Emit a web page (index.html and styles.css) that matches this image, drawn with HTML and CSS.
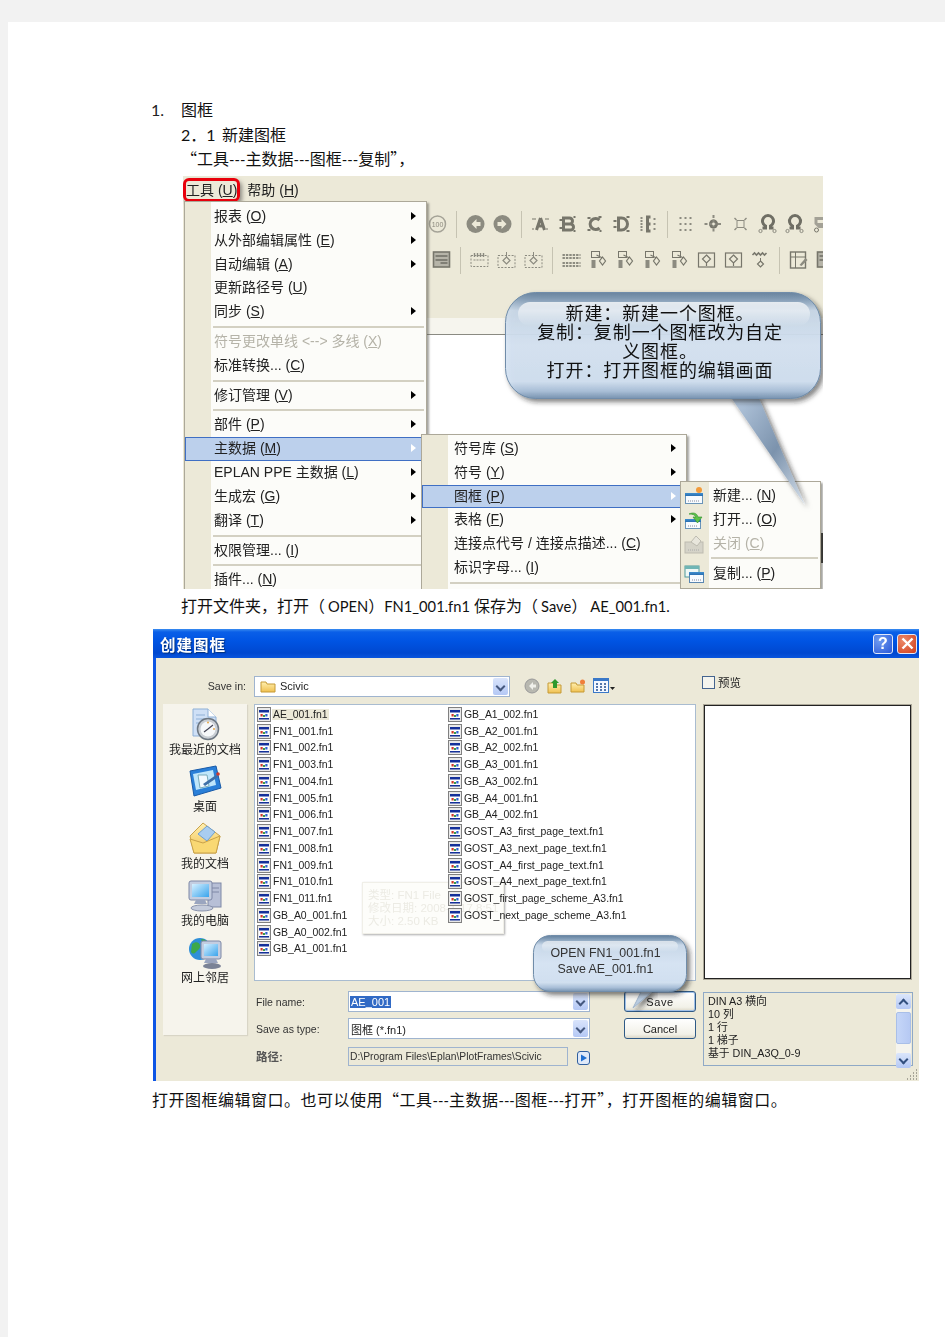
FILE: index.html
```html
<!DOCTYPE html>
<html lang="zh-CN">
<head>
<meta charset="utf-8">
<title>图框</title>
<link rel="stylesheet" href="styles.css">
</head>
<body>
<svg class="defs" width="0" height="0" aria-hidden="true">
  <defs>
    <linearGradient id="gWin" x1="0" y1="0" x2="0" y2="1"><stop offset="0" stop-color="#3f8fd0"/><stop offset="1" stop-color="#2a6fb0"/></linearGradient>
    <linearGradient id="gFolder" x1="0" y1="0" x2="0" y2="1"><stop offset="0" stop-color="#fff0b0"/><stop offset="1" stop-color="#f0c050"/></linearGradient>
    <linearGradient id="gScreen" x1="0" y1="0" x2="1" y2="1"><stop offset="0" stop-color="#d5f0ff"/><stop offset="1" stop-color="#3aa4ec"/></linearGradient>
    <linearGradient id="gB1" x1="0" y1="0" x2="0" y2="1">
      <stop offset="0" stop-color="#5d7b9a"/><stop offset=".06" stop-color="#7f9ab6"/><stop offset=".17" stop-color="#c9d9ea"/><stop offset=".5" stop-color="#d7e5f5"/><stop offset=".84" stop-color="#d2e1f2"/><stop offset=".93" stop-color="#a9c0da"/><stop offset="1" stop-color="#7491b0"/>
    </linearGradient>
    <linearGradient id="gTail" x1="0" y1="0" x2="1" y2="1"><stop offset="0" stop-color="#b9cce2"/><stop offset=".55" stop-color="#7c93ad"/><stop offset="1" stop-color="#d5dfea"/></linearGradient>
    <linearGradient id="gGloss" x1="0" y1="0" x2="0" y2="1"><stop offset="0" stop-color="#fff" stop-opacity=".9"/><stop offset="1" stop-color="#fff" stop-opacity="0"/></linearGradient>
    <filter id="fShadow" x="-10%" y="-10%" width="125%" height="130%"><feDropShadow dx="3" dy="3" stdDeviation="2.5" flood-color="#222" flood-opacity=".6"/></filter>

    <symbol id="fi" viewBox="0 0 14 15"><rect x=".5" y=".5" width="13" height="14" fill="#e9e9e9" stroke="#808080"/><rect x="2" y="3" width="10" height="9" fill="#fff"/><rect x="2" y="3" width="10" height="2.500" fill="#14309a"/><rect x="2" y="11" width="10" height="1.500" fill="#14309a"/><rect x="3.500" y="7" width="2.200" height="2.500" fill="#d0392b"/><rect x="8.300" y="7" width="2.200" height="2.500" fill="#2e62d0"/><rect x="6" y="8" width="2" height="2" fill="#3a9a4a"/></symbol>

    <symbol id="t100" viewBox="0 0 20 20"><circle cx="10" cy="10" r="8" fill="none" stroke="#a5a397" stroke-width="1.5"/><text x="10" y="12.5" font-size="7" text-anchor="middle" fill="#8c8a7e" font-family="Liberation Sans">100</text></symbol>
    <symbol id="tl" viewBox="0 0 20 20"><circle cx="10" cy="10" r="9" fill="#8c8b80"/><path d="M11 5 6 10l5 5v-3h4V8h-4z" fill="#ece9d8"/></symbol>
    <symbol id="tr" viewBox="0 0 20 20"><circle cx="10" cy="10" r="9" fill="#8c8b80"/><path d="M9 5l5 5-5 5v-3H5V8h4z" fill="#ece9d8"/></symbol>
    <symbol id="ta" viewBox="0 0 20 20"><path d="M10 4 6 16M10 4l4 12M7 12h6" stroke="#77766b" stroke-width="3" fill="none"/><path d="M2 5h3M15 5h3M2 15h2M16 15h2" stroke="#77766b" stroke-width="2" stroke-dasharray="1 1"/></symbol>
    <symbol id="tb" viewBox="0 0 20 20"><path d="M6 4h6a3 3 0 0 1 0 6H6zM6 10h7a3 3 0 0 1 0 6H6z" stroke="#77766b" stroke-width="3" fill="none"/><path d="M2 6h3M2 14h3M16 3h2M16 17h2" stroke="#77766b" stroke-width="2"/></symbol>
    <symbol id="tc" viewBox="0 0 20 20"><path d="M15 6a5.5 5.5 0 1 0 0 8" stroke="#77766b" stroke-width="3.200" fill="none"/><path d="M3 4h3M14 3h3M3 16h3M15 17h2" stroke="#77766b" stroke-width="2"/></symbol>
    <symbol id="td" viewBox="0 0 20 20"><path d="M7 4h3a6 6 0 0 1 0 12H7z" stroke="#77766b" stroke-width="3" fill="none"/><path d="M2 7h3M2 13h3M15 3h3M15 17h3" stroke="#77766b" stroke-width="2"/></symbol>
    <symbol id="te" viewBox="0 0 20 20"><path d="M12 3h-3v14h3M9 10h3" stroke="#77766b" stroke-width="3" fill="none"/><path d="M3 3v14M15 5h3M15 10h3M15 15h3" stroke="#8c8b80" stroke-width="2" stroke-dasharray="2 1"/></symbol>
    <symbol id="tdots" viewBox="0 0 20 20"><path d="M3 4h14M3 10h14M3 16h14" stroke="#8c8b80" stroke-width="2" stroke-dasharray="2 3"/></symbol>
    <symbol id="tstar" viewBox="0 0 20 20"><circle cx="10" cy="10" r="4.500" fill="#77766b"/><path d="M10 1v18M1 10h18" stroke="#8c8b80" stroke-width="2" stroke-dasharray="3 1.5"/><circle cx="10" cy="10" r="1.400" fill="#ece9d8"/></symbol>
    <symbol id="tx" viewBox="0 0 20 20"><rect x="6.500" y="6.500" width="7" height="7" fill="none" stroke="#8c8b80"/><path d="M4 4l2 2M16 4l-2 2M4 16l2-2M16 16l-2-2" stroke="#8c8b80" stroke-width="1.400"/></symbol>
    <symbol id="to" viewBox="0 0 20 20"><path d="M5 14h3v-2a5.500 5.500 0 1 1 5 0v2h3" stroke="#6f6e64" stroke-width="3" fill="none"/><circle cx="3" cy="17" r="1.600" fill="none" stroke="#8c8b80"/><circle cx="17" cy="17" r="1.600" fill="none" stroke="#8c8b80"/></symbol>
    <symbol id="tg" viewBox="0 0 20 20"><path d="M3 3h14v7l-4 4H7l-4-4z" fill="#a3a196"/><path d="M6 6h8v3H6z" fill="#ece9d8"/><circle cx="5" cy="16" r="2" fill="none" stroke="#77766b"/><circle cx="15" cy="16" r="2" fill="none" stroke="#77766b"/></symbol>
    <symbol id="tform" viewBox="0 0 20 20"><rect x="2" y="2" width="16" height="15" fill="#b6b4a8" stroke="#77766b" stroke-width="1.600"/><path d="M4 6h12M4 10h12M9 13h7" stroke="#6f6e64" stroke-width="1.500"/></symbol>
    <symbol id="tdash" viewBox="0 0 20 20"><rect x="1.500" y="5.500" width="17" height="11" fill="none" stroke="#8c8b80" stroke-dasharray="2 1.400"/><path d="M5 3v4M8 3v4M11 3v4M14 3v4" stroke="#8c8b80" stroke-width="1.400"/><path d="M4 10h12" stroke="#8c8b80" stroke-dasharray="2 1"/></symbol>
    <symbol id="tdia" viewBox="0 0 20 20"><rect x="1.500" y="5.500" width="17" height="12" fill="none" stroke="#8c8b80" stroke-dasharray="2 1.400"/><path d="M10 7l3.500 3.500L10 14l-3.500-3.500z" fill="none" stroke="#8c8b80" stroke-width="1.200"/><path d="M10 2v5" stroke="#8c8b80"/></symbol>
    <symbol id="tgrid" viewBox="0 0 20 20"><path d="M1 5h18M1 8h18M1 13h18M1 16h18" stroke="#8c8b80" stroke-width="2" stroke-dasharray="2.400 1"/></symbol>
    <symbol id="tbd" viewBox="0 0 20 20"><rect x="3" y="1.500" width="8" height="6" fill="none" stroke="#77766b"/><rect x="3" y="10" width="4" height="8" fill="#8c8b80"/><path d="M14 7l3 4-3 4-3-4zM8 5l6 3" stroke="#77766b" stroke-width="1.200" fill="none"/></symbol>
    <symbol id="tbox" viewBox="0 0 20 20"><rect x="2" y="3" width="16" height="14" fill="none" stroke="#77766b" stroke-width="1.200"/><path d="M10 5l4 4-4 4-4-4zM10 13v3" stroke="#77766b" stroke-width="1.200" fill="none"/></symbol>
    <symbol id="twave" viewBox="0 0 20 20"><path d="M2 5l2-2 2 2 2-2 2 2 2-2 2 2 2-2" stroke="#77766b" stroke-width="1.600" fill="none"/><path d="M10 8v3" stroke="#77766b"/><path d="M10 11l3 3-3 3-3-3z" fill="none" stroke="#77766b" stroke-width="1.200"/></symbol>
    <symbol id="tnote" viewBox="0 0 20 20"><rect x="2" y="2" width="15" height="16" fill="none" stroke="#77766b" stroke-width="1.400"/><path d="M2 7h15M7 2v16" stroke="#77766b"/><path d="M11 15l6-7 2 2-6 6z" fill="#8c8b80"/></symbol>

    <symbol id="mnew" viewBox="0 0 20 20"><rect x="1.500" y="7.500" width="17" height="10" fill="#f7fbff" stroke="#6a94b8"/><rect x="1" y="7" width="18" height="3" fill="url(#gWin)"/><path d="M4 15h12" stroke="#889" stroke-dasharray="1 1"/><circle cx="15" cy="4" r="3" fill="#f29a3a"/></symbol>
    <symbol id="mopen" viewBox="0 0 20 20"><rect x="1.500" y="9.500" width="15" height="9" fill="#f7fbff" stroke="#6a94b8"/><rect x="1" y="9" width="16" height="3" fill="url(#gWin)"/><path d="M4 16h10" stroke="#889" stroke-dasharray="1 1"/><path d="M5 4c4-2 8-1 9 3h4l-4.500 6L9 7h3c-1-2-3-3-7-3z" fill="#5cc24a" stroke="#2f8f2a" stroke-width=".6"/></symbol>
    <symbol id="mclose" viewBox="0 0 20 20"><rect x="1" y="8" width="18" height="11" fill="#d5d3c8" stroke="#bdbbb0"/><path d="M4 16h12" stroke="#aaa" stroke-dasharray="1 1"/><path d="M7 8l5-6 5 5-4 5z" fill="#e8e6dc" stroke="#bdbbb0"/></symbol>
    <symbol id="mcopy" viewBox="0 0 20 20"><rect x="1" y="2" width="14" height="11" fill="#eef7f5" stroke="#4e9a9a"/><rect x="1" y="2" width="14" height="3" fill="#6fb5b5"/><rect x="5.500" y="8.500" width="14" height="10" fill="#f7fbff" stroke="#5a86b0"/><rect x="5" y="8" width="15" height="3" fill="url(#gWin)"/><path d="M8 16h9" stroke="#889" stroke-dasharray="1 1"/></symbol>

    <symbol id="precent" viewBox="0 0 34 34"><path d="M5 1h15l8 8v19H5z" fill="#cfe0f6" stroke="#8fb0d6"/><path d="M20 1v8h8" fill="#fff" stroke="#8fb0d6"/><path d="M8 7h9M8 11h9M8 15h7" stroke="#8fb0d6"/><circle cx="20" cy="21" r="10.500" fill="#c9ced4" stroke="#6c7681" stroke-width="1.500"/><circle cx="20" cy="21" r="7.500" fill="#f6f8fa"/><path d="M20 21l5-4M20 21l-4 3" stroke="#445" stroke-width="1.200"/><circle cx="20" cy="14.500" r=".9" fill="#e5a03a"/><circle cx="26" cy="21" r=".9" fill="#e5a03a"/></symbol>
    <symbol id="pdesk" viewBox="0 0 34 34"><path d="M2 6 28 1l5 22-27 8z" fill="#2a7fd8" stroke="#185aa8"/><path d="M5 9l20-4 3 15-20 5z" fill="#bfe6fb"/><path d="M10 10h9l2 11-9 2z" fill="#f2f9ff" stroke="#7ab"/><path d="M15 19l13-9 2 2-13 9z" fill="#3f6fa8"/><circle cx="30" cy="9" r="1.800" fill="#d0392b"/></symbol>
    <symbol id="pdocs" viewBox="0 0 34 34"><path d="M2 14 15 1l17 13-4 17H6z" fill="url(#gFolder)" stroke="#c9a24a"/><path d="M10 12l9-8 8 6-8 9z" fill="#a9cdf0" stroke="#6e9fd0"/><path d="M2 17l13 4 17-7-4 17H6z" fill="#f9d873" stroke="#c9a24a"/></symbol>
    <symbol id="ppc" viewBox="0 0 34 34"><rect x="20" y="4" width="13" height="24" fill="#b7bfd6" stroke="#7e88a6"/><path d="M22 9h9M22 13h9" stroke="#7e88a6"/><rect x="1" y="2" width="23" height="19" rx="2" fill="#c3cde0" stroke="#7e88a6"/><rect x="4" y="5" width="17" height="13" fill="url(#gScreen)"/><path d="M8 21h9l2 4H6z" fill="#9aa5bf"/><ellipse cx="14" cy="29" rx="11" ry="3" fill="#c4cbdb" stroke="#8a93ad"/></symbol>
    <symbol id="pnet" viewBox="0 0 34 34"><circle cx="12" cy="13" r="11" fill="#2f8fd8"/><path d="M4 8c4-3 7-2 8 1s-2 5-4 7-3 2-5 0zM13 3c3 0 6 1 7 4l-4 3z" fill="#3da84a"/><rect x="13" y="5" width="20" height="18" rx="2" fill="#c3cde0" stroke="#7e88a6"/><rect x="16" y="8" width="14" height="12" fill="url(#gScreen)"/><path d="M18 23h10l2 4H16z" fill="#9aa5bf"/><ellipse cx="24" cy="30" rx="9" ry="3" fill="#7a8296"/></symbol>
  </defs>
</svg>

<main class="page">
  <p class="line lvl0"><span class="num">1.</span><span>图框</span></p>
  <p class="line lvl1"><span class="num2">2．1</span><span>新建图框</span></p>
  <p class="line lvl1 tight"><span class="cjk">“</span>工具<span class="dash">---</span>主数据<span class="dash">---</span>图框<span class="dash">---</span>复制<span class="cjk">”，</span></p>

  <section class="shot">
    <div class="menubar">
      <span class="mi">工具 (<u>U</u>)</span>
      <span class="mi">帮助 (<u>H</u>)</span>
      <span class="redmark"></span>
    </div>
    <div class="toolbar">
      <svg class="tool"><use href="#t100"/></svg><i class="tsep"></i>
      <svg class="tool"><use href="#tl"/></svg><svg class="tool"><use href="#tr"/></svg><i class="tsep"></i>
      <svg class="tool"><use href="#ta"/></svg><svg class="tool"><use href="#tb"/></svg><svg class="tool"><use href="#tc"/></svg><svg class="tool"><use href="#td"/></svg><svg class="tool"><use href="#te"/></svg><i class="tsep"></i>
      <svg class="tool"><use href="#tdots"/></svg><svg class="tool"><use href="#tstar"/></svg><svg class="tool"><use href="#tx"/></svg><svg class="tool"><use href="#to"/></svg><svg class="tool"><use href="#to"/></svg><svg class="tool"><use href="#tg"/></svg>
    </div>
    <div class="toolbar second">
      <svg class="tool"><use href="#tform"/></svg><i class="tsep"></i>
      <svg class="tool"><use href="#tdash"/></svg><svg class="tool"><use href="#tdia"/></svg><svg class="tool"><use href="#tdia"/></svg><i class="tsep"></i>
      <svg class="tool"><use href="#tgrid"/></svg><svg class="tool"><use href="#tbd"/></svg><svg class="tool"><use href="#tbd"/></svg><svg class="tool"><use href="#tbd"/></svg><svg class="tool"><use href="#tbd"/></svg><svg class="tool"><use href="#tbox"/></svg><svg class="tool"><use href="#tbox"/></svg><svg class="tool"><use href="#twave"/></svg><i class="tsep"></i>
      <svg class="tool"><use href="#tnote"/></svg><svg class="tool"><use href="#tform"/></svg>
    </div>
    <div class="strip"></div>
    <div class="canvas"><i class="darkbit"></i></div>

    <div class="menu m1">
      <div class="mrow has">报表 (<u>O</u>)</div>
      <div class="mrow has">从外部编辑属性 (<u>E</u>)</div>
      <div class="mrow has">自动编辑 (<u>A</u>)</div>
      <div class="mrow">更新路径号 (<u>U</u>)</div>
      <div class="mrow has">同步 (<u>S</u>)</div>
      <div class="msep"></div>
      <div class="mrow off">符号更改单线 &lt;--&gt; 多线 (<u>X</u>)</div>
      <div class="mrow">标准转换... (<u>C</u>)</div>
      <div class="msep"></div>
      <div class="mrow has">修订管理 (<u>V</u>)</div>
      <div class="msep"></div>
      <div class="mrow has">部件 (<u>P</u>)</div>
      <div class="mrow has hl">主数据 (<u>M</u>)</div>
      <div class="mrow has">EPLAN PPE 主数据 (<u>L</u>)</div>
      <div class="mrow has">生成宏 (<u>G</u>)</div>
      <div class="mrow has">翻译 (<u>T</u>)</div>
      <div class="msep wide"></div>
      <div class="mrow">权限管理... (<u>I</u>)</div>
      <div class="msep thin"></div>
      <div class="mrow">插件... (<u>N</u>)</div>
    </div>

    <div class="menu m2">
      <div class="mrow has">符号库 (<u>S</u>)</div>
      <div class="mrow has">符号 (<u>Y</u>)</div>
      <div class="mrow has hl">图框 (<u>P</u>)</div>
      <div class="mrow has">表格 (<u>F</u>)</div>
      <div class="mrow">连接点代号 / 连接点描述... (<u>C</u>)</div>
      <div class="mrow">标识字母... (<u>I</u>)</div>
      <div class="msep"></div>
    </div>

    <div class="menu m3">
      <div class="mrow"><svg class="micon"><use href="#mnew"/></svg>新建... (<u>N</u>)</div>
      <div class="mrow"><svg class="micon"><use href="#mopen"/></svg>打开... (<u>O</u>)</div>
      <div class="mrow off"><svg class="micon"><use href="#mclose"/></svg>关闭 (<u>C</u>)</div>
      <div class="msep"></div>
      <div class="mrow"><svg class="micon"><use href="#mcopy"/></svg>复制... (<u>P</u>)</div>
    </div>

    <div class="bubble b1">
      <svg class="bshape" width="330" height="225" viewBox="0 0 330 225">
        <path d="M226 105 301 214 254 105z" fill="url(#gTail)" filter="url(#fShadow)"/>
        <rect x="1.500" y="1.500" width="315" height="106" rx="30" fill="url(#gB1)" fill-opacity=".9" stroke="#6f8ca9" filter="url(#fShadow)"/>
        <rect x="14" y="11" width="292" height="24" rx="12" fill="url(#gGloss)" opacity=".85"/>
      </svg>
      <p class="btext">新建：新建一个图框。<br>复制：复制一个图框改为自定<br>义图框。<br>打开：打开图框的编辑画面</p>
    </div>
  </section>

  <p class="line lvl1 cap">打开文件夹，打开（<span class="lat gap">OPEN</span>）<span class="lat">FN1_001.fn1</span> 保存为（<span class="lat gap">Save</span>）<span class="lat gap">AE_001.fn1.</span></p>

  <section class="dlg">
    <header class="dtitle">
      <span class="dname">创建图框</span>
      <span class="capbtn help">?</span>
      <span class="capbtn close"><svg width="13" height="13" viewBox="0 0 13 13"><path d="M1.500 1.500l10 10M11.500 1.500l-10 10" stroke="#fff" stroke-width="2.400"/></svg></span>
    </header>
    <div class="dtop">
      <span class="lab savein">Save in:</span>
      <div class="combo top">
        <svg class="cfolder" width="16" height="14" viewBox="0 0 16 14"><path d="M1 3h5l1 2h8v8H1z" fill="url(#gFolder)" stroke="#c59a36"/></svg>
        <span>Scivic</span>
        <b class="drop"></b>
      </div>
      <div class="nav">
        <svg width="16" height="16" viewBox="0 0 16 16"><circle cx="8" cy="8" r="7" fill="#b8b8b0" stroke="#999"/><path d="M9 4 5 8l4 4V9.500h3v-3H9z" fill="#f0f0ea"/></svg>
        <svg width="16" height="16" viewBox="0 0 16 16"><path d="M1 5h5l1 2h7v8H1z" fill="url(#gFolder)" stroke="#c59a36"/><path d="M8 1l4 4h-2v5H6V5H4z" fill="#2f9a2f"/></svg>
        <svg width="16" height="16" viewBox="0 0 16 16"><path d="M1 5h5l1 2h7v7H1z" fill="url(#gFolder)" stroke="#c59a36"/><circle cx="12.500" cy="4" r="2.500" fill="#f07f3a"/></svg>
        <svg width="22" height="16" viewBox="0 0 22 16"><rect x=".5" y=".5" width="15" height="14" fill="#f4f8ff" stroke="#3a78c8"/><rect x="0" y="0" width="16" height="3" fill="#3a78c8"/><path d="M3 6h2M7 6h2M11 6h2M3 9h2M7 9h2M11 9h2M3 12h2M7 12h2M11 12h2" stroke="#5577aa" stroke-width="2"/><path d="M17 9h5l-2.500 3z" fill="#222"/></svg>
      </div>
      <label class="pv"><i class="chk"></i>预览</label>
    </div>

    <div class="dmain">
      <aside class="places">
        <div class="place"><svg><use href="#precent"/></svg><span>我最近的文档</span></div>
        <div class="place"><svg><use href="#pdesk"/></svg><span>桌面</span></div>
        <div class="place"><svg><use href="#pdocs"/></svg><span>我的文档</span></div>
        <div class="place"><svg><use href="#ppc"/></svg><span>我的电脑</span></div>
        <div class="place"><svg><use href="#pnet"/></svg><span>网上邻居</span></div>
      </aside>

      <div class="center">
        <div class="list">
          <div class="col c1">
            <div class="file sel"><svg><use href="#fi"/></svg><span>AE_001.fn1</span></div>
            <div class="file"><svg><use href="#fi"/></svg><span>FN1_001.fn1</span></div>
            <div class="file"><svg><use href="#fi"/></svg><span>FN1_002.fn1</span></div>
            <div class="file"><svg><use href="#fi"/></svg><span>FN1_003.fn1</span></div>
            <div class="file"><svg><use href="#fi"/></svg><span>FN1_004.fn1</span></div>
            <div class="file"><svg><use href="#fi"/></svg><span>FN1_005.fn1</span></div>
            <div class="file"><svg><use href="#fi"/></svg><span>FN1_006.fn1</span></div>
            <div class="file"><svg><use href="#fi"/></svg><span>FN1_007.fn1</span></div>
            <div class="file"><svg><use href="#fi"/></svg><span>FN1_008.fn1</span></div>
            <div class="file"><svg><use href="#fi"/></svg><span>FN1_009.fn1</span></div>
            <div class="file"><svg><use href="#fi"/></svg><span>FN1_010.fn1</span></div>
            <div class="file"><svg><use href="#fi"/></svg><span>FN1_011.fn1</span></div>
            <div class="file"><svg><use href="#fi"/></svg><span>GB_A0_001.fn1</span></div>
            <div class="file"><svg><use href="#fi"/></svg><span>GB_A0_002.fn1</span></div>
            <div class="file"><svg><use href="#fi"/></svg><span>GB_A1_001.fn1</span></div>
          </div>
          <div class="col c2">
            <div class="file"><svg><use href="#fi"/></svg><span>GB_A1_002.fn1</span></div>
            <div class="file"><svg><use href="#fi"/></svg><span>GB_A2_001.fn1</span></div>
            <div class="file"><svg><use href="#fi"/></svg><span>GB_A2_002.fn1</span></div>
            <div class="file"><svg><use href="#fi"/></svg><span>GB_A3_001.fn1</span></div>
            <div class="file"><svg><use href="#fi"/></svg><span>GB_A3_002.fn1</span></div>
            <div class="file"><svg><use href="#fi"/></svg><span>GB_A4_001.fn1</span></div>
            <div class="file"><svg><use href="#fi"/></svg><span>GB_A4_002.fn1</span></div>
            <div class="file"><svg><use href="#fi"/></svg><span>GOST_A3_first_page_text.fn1</span></div>
            <div class="file"><svg><use href="#fi"/></svg><span>GOST_A3_next_page_text.fn1</span></div>
            <div class="file"><svg><use href="#fi"/></svg><span>GOST_A4_first_page_text.fn1</span></div>
            <div class="file"><svg><use href="#fi"/></svg><span>GOST_A4_next_page_text.fn1</span></div>
            <div class="file"><svg><use href="#fi"/></svg><span>GOST_first_page_scheme_A3.fn1</span></div>
            <div class="file"><svg><use href="#fi"/></svg><span>GOST_next_page_scheme_A3.fn1</span></div>
          </div>
          <div class="ghost">类型: FN1 File<br>修改日期: 2008-1-17 8:51<br>大小: 2.50 KB</div>
        </div>

        <div class="form">
          <span class="lab">File name:</span>
          <div class="combo"><span class="seltext">AE_001</span><b class="drop"></b></div>
          <span></span>
          <button class="btn def" type="button">Save</button>

          <span class="lab">Save as type:</span>
          <div class="combo"><span class="ctext">图框 (*.fn1)</span><b class="drop"></b></div>
          <span></span>
          <button class="btn" type="button">Cancel</button>

          <span class="lab zh">路径:</span>
          <div class="pathcell">
            <div class="path">D:\Program Files\Eplan\PlotFrames\Scivic</div>
            <svg class="go" width="13" height="14" viewBox="0 0 13 14"><rect x=".5" y=".5" width="12" height="13" rx="2.500" fill="#dfe9f8" stroke="#2f5f9f"/><path d="M4 3.500 10 7l-6 3.500z" fill="#1f6fd0"/></svg>
          </div>
        </div>
      </div>

      <div class="right">
        <div class="preview"></div>
        <div class="desc">
          <div class="dtext">DIN A3 横向<br>10 列<br>1 行<br>1 梯子<br>基于 DIN_A3Q_0-9</div>
          <div class="sbar">
            <b class="sb up"></b>
            <b class="thumb"></b>
            <b class="sb down"></b>
          </div>
        </div>
      </div>
    </div>

    <svg class="grip" width="11" height="11" viewBox="0 0 11 11"><path d="M9 1h1M6 4h1M9 4h1M3 7h1M6 7h1M9 7h1M0 10h1M3 10h1M6 10h1M9 10h1" stroke="#a6a497" stroke-width="2"/></svg>

    <div class="bubble b2">
      <svg class="bshape" width="170" height="85" viewBox="0 0 170 85">
        <path d="M110 56 101 74 122 56z" fill="#b9cbdf" stroke="#9fb4cb" filter="url(#fShadow)"/>
        <rect x="1.500" y="1.500" width="153" height="56" rx="17" fill="url(#gB1)" fill-opacity=".96" stroke="#6f8ca9" filter="url(#fShadow)"/>
        <rect x="10" y="7" width="136" height="11" rx="5.500" fill="url(#gGloss)" opacity=".7"/>
      </svg>
      <p class="btext">OPEN FN1_001.fn1<br>Save AE_001.fn1</p>
    </div>
  </section>

  <p class="line last">打开图框编辑窗口。也可以使用<span class="cjk">“</span>工具<span class="dash">---</span>主数据<span class="dash">---</span>图框<span class="dash">---</span>打开<span class="cjk">”，</span>打开图框的编辑窗口。</p>
</main>
</body>
</html>
```

FILE: styles.css
```css
* { box-sizing: border-box; }
html, body { margin: 0; padding: 0; }
body {
  background: #f2f2f2;
  font-family: Lato, "Noto Sans CJK SC", sans-serif;
  color: #111;
}
.defs { position: absolute; }
.page {
  margin: 22px 0 0 8px;
  padding-top: 76px;
  height: 1315px;
  background: #fff;
  overflow: hidden;
}
.line {
  margin: 0;
  height: 24px;
  line-height: 24px;
  font-size: 16px;
  white-space: nowrap;
}
.cjk { font-family: "Noto Sans CJK SC", sans-serif; }
.lat { font-size: 14.7px; }
.lat.gap { margin-left: 3px; }
.dash { font-size: 14.7px; letter-spacing: 0; }
.lvl0 { margin-left: 143px; display: flex; }
.num { width: 30px; color: #222; }
.lvl1 { margin-left: 173px; }
.lvl1 .num2 { display: inline-block; width: 41px; }
.lvl0 + .lvl1 { margin-top: 1px; }
.tight { margin-top: -1px; }
.cap { margin-top: 5px; }
.last { margin: 6px 0 0 144px; letter-spacing: .5px; }

/* screenshot one */
.shot {
  position: relative;
  margin: 6px 0 0 175px;
  width: 640px;
  height: 413px;
  background: #ece9d8;
  overflow: hidden;
  display: flex;
  flex-direction: column;
  font-family: "Liberation Sans", "Noto Sans CJK SC", sans-serif;
  font-size: 14px;
  color: #222;
  filter: blur(.3px);
}
.menubar {
  position: relative;
  display: flex;
  gap: 10px;
  height: 32px;
  padding: 2px 0 0 3px;
  line-height: 24px;
}
.redmark {
  position: absolute;
  left: 0;
  top: 2px;
  width: 57px;
  height: 24px;
  border: 3px solid #e8000c;
  border-radius: 6px;
  box-shadow: 2px 3px 4px rgba(60, 60, 60, .55);
}
.toolbar {
  display: flex;
  align-items: center;
  height: 30px;
  padding-left: 241px;
  margin-top: 1px;
}
.toolbar.second { padding-left: 245px; margin-top: 6px; }
.tool { flex: none; width: 27px; height: 20px; }
.tsep { flex: none; width: 1px; height: 27px; margin: 0 5px; background: #c6c3b2; }
.strip { height: 38px; margin-top: 5px; }
.canvas {
  position: relative;
  flex: 1;
  margin-left: 2px;
  background: #fff;
  border-top: 17px solid #f6f5ee;
}
.canvas::before {
  content: "";
  position: absolute;
  left: 0;
  right: 0;
  top: -1px;
  height: 1px;
  background: #8a8a82;
}
.darkbit {
  position: absolute;
  right: 0;
  top: 198px;
  width: 2px;
  height: 30px;
  background: #222;
}

.menu {
  position: absolute;
  background: linear-gradient(90deg, #ece9d8 26px, #fcfcf9 26px);
  border: 1px solid #aca899;
  box-shadow: 2px 2px 2px rgba(90, 90, 80, .55);
}
.m1 { left: 1px; top: 25px; width: 243px; height: 400px; padding-top: 3px; }
.m2 { left: 238px; top: 258px; width: 266px; height: 175px; padding-top: 2px; }
.m3 { left: 497px; top: 305px; width: 141px; height: 108px; padding-top: 2px; background: linear-gradient(90deg, #ece9d8 28px, #fcfcf9 28px); z-index: 2; }
.mrow {
  position: relative;
  height: 23.8px;
  line-height: 23.8px;
  padding-left: 29px;
  white-space: nowrap;
}
.m2 .mrow { padding-left: 32px; }
.m3 .mrow { padding-left: 32px; }
.mrow.has::after {
  content: "";
  position: absolute;
  right: 10px;
  top: 7px;
  border: 4px solid transparent;
  border-left: 5px solid #000;
  border-right: 0;
}
.mrow.off { color: #b5b3a8; }
.mrow.hl {
  background: #bcd0ec;
  outline: 1px solid #3f6fc4;
  outline-offset: -1px;
}
.mrow.hl::after { border-left-color: #fff; }
.micon { position: absolute; left: 3px; top: 2px; width: 20px; height: 20px; }
.msep { height: 6px; margin: 0 2px 0 28px; padding-top: 2px; }
.msep::before { content: ""; display: block; height: 2px; background: #d3d0c2; }
.msep.thin { height: 5px; padding-top: 1px; }
.msep.wide { height: 7px; padding-top: 3px; }
.m3 .msep { margin-left: 30px; height: 7px; }

.bubble { position: absolute; z-index: 5; }
.bshape { position: absolute; left: 0; top: 0; overflow: visible; }
.btext {
  position: relative;
  margin: 0;
  text-align: center;
  color: #111;
}
.b1 { left: 321px; top: 115px; width: 318px; height: 110px; pointer-events: none; }
.b1 .btext {
  padding: 12px 6px 0 0;
  font-family: "Noto Sans CJK SC", sans-serif;
  font-size: 18px;
  line-height: 19px;
  letter-spacing: .9px;
}
.b2 { left: 376px; top: 305px; width: 157px; height: 60px; }
.b2 .btext {
  padding: 12px 10px 0 0;
  font-family: "Liberation Sans", sans-serif;
  font-size: 12.4px;
  line-height: 15.5px;
  color: #333;
}

/* dialog */
.dlg {
  position: relative;
  margin: 11px 0 0 145px;
  width: 766px;
  height: 452px;
  background: #ece9d8;
  border-left: 3px solid #0d55e5;
  display: flex;
  flex-direction: column;
  font-family: "Liberation Sans", "Noto Sans CJK SC", sans-serif;
  font-size: 11px;
  color: #222;
  filter: blur(.3px);
}
.dtitle {
  flex: none;
  display: flex;
  align-items: center;
  gap: 4px;
  height: 29px;
  margin-left: -3px;
  padding: 0 2px 0 7px;
  background: linear-gradient(180deg, #3a8cf0 0, #0a5fe8 3px, #0054e3 12px, #0048d0 24px, #0a55dd 29px);
}
.dname {
  flex: 1;
  font-family: "Noto Sans CJK SC", sans-serif;
  font-size: 15.5px;
  font-weight: 700;
  letter-spacing: 1px;
  color: #fff;
  text-shadow: 1px 1px 1px #02307a;
}
.capbtn {
  display: flex;
  align-items: center;
  justify-content: center;
  width: 20px;
  height: 20px;
  border: 1px solid #dfe8fa;
  border-radius: 3px;
  color: #fff;
  font: 700 16px "Liberation Sans", sans-serif;
}
.help { background: radial-gradient(circle at 30% 30%, #6f9cf0, #2a58d8); }
.close { background: radial-gradient(circle at 30% 30%, #ec8a6a, #d03c1a); }

.dtop {
  flex: none;
  display: flex;
  align-items: center;
  height: 46px;
  padding-top: 10px;
  font-size: 10.6px;
}
.lab { color: #333; }
.savein { width: 90px; text-align: right; margin-right: 8px; }
.combo {
  position: relative;
  display: flex;
  align-items: center;
  height: 21px;
  background: #fff;
  border: 1px solid #9fb4cf;
  font-size: 11px;
}
.combo.top { width: 256px; gap: 4px; padding-left: 5px; }
.drop {
  position: absolute;
  right: 1px;
  top: 1px;
  bottom: 1px;
  width: 15px;
  border-radius: 2px;
  background: linear-gradient(180deg, #d9e4fb, #b4c8f5);
}
.drop::after {
  content: "";
  position: absolute;
  left: 4px;
  top: 5px;
  width: 5px;
  height: 5px;
  border-right: 2px solid #44587f;
  border-bottom: 2px solid #44587f;
  transform: rotate(45deg);
}
.nav { display: flex; align-items: center; gap: 7px; margin-left: 14px; width: 178px; }
.pv { display: flex; align-items: center; gap: 3px; font-family: "Noto Sans CJK SC", sans-serif; font-size: 11.5px; margin-top: -8px; }
.chk { width: 13px; height: 13px; background: #f4f4ee; border: 1px solid #44648f; }

.dmain { flex: 1; display: flex; align-items: flex-start; gap: 7px; padding-left: 7px; }
.places {
  flex: none;
  width: 84px;
  height: 331px;
  background: #f6f4ec;
  box-shadow: 1px 1px 1px #d8d5c6;
  padding-top: 4px;
  display: flex;
  flex-direction: column;
  align-items: center;
}
.place { display: flex; flex-direction: column; align-items: center; height: 57px; }
.place svg { width: 34px; height: 34px; }
.place span { line-height: 16px; font-size: 12px; color: #222; white-space: nowrap; }

.center { flex: none; width: 442px; position: relative; }
.list {
  position: relative;
  display: flex;
  height: 277px;
  background: #fff;
  border: 1px solid #a9bcd0;
  padding: 1px 0 0 2px;
}
.col { position: relative; }
.c1 { width: 191px; }
.c2 { z-index: 1; }
.file { display: flex; align-items: center; gap: 1px; height: 16.75px; white-space: nowrap; }
.file svg { flex: none; width: 14px; height: 15px; }
.file span { padding: 0 1px; font-size: 10.45px; }
.file.sel span { background: #ece9d8; }
.ghost {
  position: absolute;
  left: 107px;
  top: 177px;
  width: 142px;
  height: 52px;
  padding: 6px 5px;
  background: #fdfdfa;
  border: 1px solid #f0efe8;
  box-shadow: 1px 1px 2px #aaa;
  color: #ecebe4;
  font-size: 11.5px;
  line-height: 13px;
  white-space: nowrap;
}

.form {
  display: grid;
  grid-template-columns: 94px 242px 34px 72px;
  grid-template-rows: 21px 21px 19px;
  row-gap: 6px;
  align-items: center;
  margin-top: 10px;
}
.form .lab { padding-left: 2px; font-size: 10.5px; }
.form .lab.zh { margin-top: 2px; font-size: 11.5px; font-weight: 700; color: #555; }
.form .combo { width: 242px; padding-left: 1px; }
.seltext { background: #316ac5; color: #fff; padding: 0 1px; }
.ctext { padding-left: 1px; }
.pathcell { grid-column: 2 / 5; display: flex; align-items: center; gap: 9px; margin-top: 4px; }
.path {
  width: 220px;
  height: 19px;
  line-height: 17px;
  border: 1px solid #9fb4cf;
  font-size: 10.3px;
  padding-left: 1px;
  white-space: nowrap;
  overflow: hidden;
  color: #333;
}
.go { margin-top: 3px; }
.btn {
  height: 21px;
  padding: 0;
  background: linear-gradient(180deg, #fff, #f2f1e8 80%, #dcd8c8);
  border: 1px solid #2f5a86;
  border-radius: 3px;
  font: 11px "Liberation Sans", sans-serif;
  color: #222;
}
.btn.def { box-shadow: inset 0 0 0 1px #9fc0e8; letter-spacing: .6px; }

.right { flex: none; width: 210px; }
.preview { height: 276px; width: 209px; background: #fff; border: 1px solid #aca899; outline: 1px solid #222; outline-offset: -2px; }
.desc {
  display: flex;
  margin-top: 12px;
  height: 74px;
  border: 1px solid #8fa9c6;
  background: #ece9d8;
}
.dtext { flex: 1; padding: 2px 4px; font-size: 10.8px; line-height: 13px; color: #222; white-space: nowrap; }
.sbar { flex: none; width: 15px; margin: 1px 1px 1px 0; display: flex; flex-direction: column; justify-content: space-between; background: #f5f4ee; }
.sb { position: relative; display: block; flex: none; height: 15px; border-radius: 2px; background: linear-gradient(180deg, #dbe6fb, #b4c8f5); }
.sb::after {
  content: "";
  position: absolute;
  left: 4px;
  width: 5px;
  height: 5px;
  border-left: 2px solid #33507f;
  border-top: 2px solid #33507f;
}
.sb.up::after { top: 6px; transform: rotate(45deg); }
.sb.down::after { top: 3px; transform: rotate(225deg); }
.thumb { flex: none; height: 32px; border-radius: 2px; background: linear-gradient(90deg, #c5d6f8, #b6c9f3); border: 1px solid #a9bfe8; margin-top: 3px; margin-bottom: 9px; }

.grip { position: absolute; right: 1px; bottom: 1px; }
```
